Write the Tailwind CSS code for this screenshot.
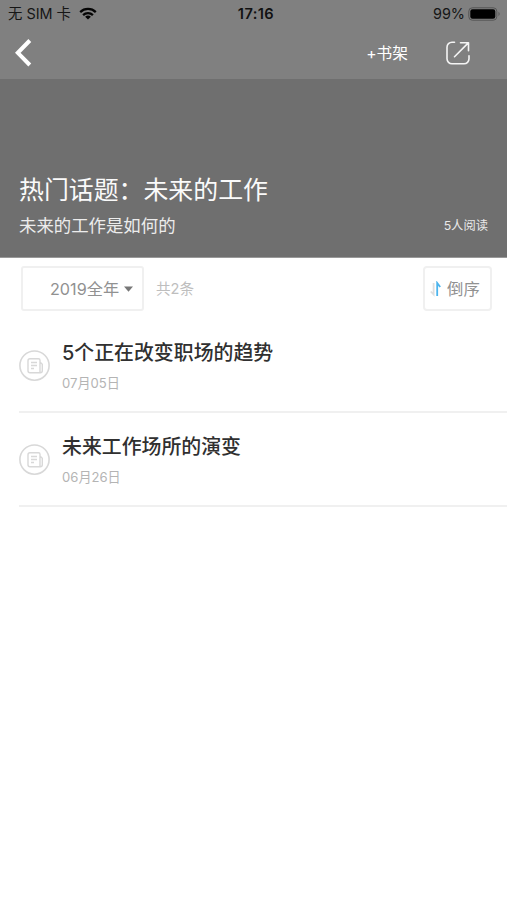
<!DOCTYPE html>
<html lang="zh-CN">
<head>
<meta charset="utf-8">
<title>热门话题</title>
<script src="https://cdn.jsdelivr.net/npm/@tailwindcss/browser@4"></script>
</head>
<body class="bg-white">
<div class="flex h-[900px] w-[507px] flex-col overflow-hidden bg-white font-['Inter','Noto_Sans_CJK_SC',sans-serif]">
  <header class="h-[79px] shrink-0 bg-[#808080]">
    <div class="grid h-[27px] grid-cols-3 items-center pl-2 pr-[6px] text-[14.4px] leading-[20px] text-[#161616]">
      <div class="flex items-center whitespace-nowrap">
        <span class="w-[64px]">无 SIM 卡</span>
        <svg class="ml-[7px] h-[13px] w-[18px]" viewBox="0 0 18 13" fill="none" stroke="#050505" stroke-width="2.3"><path d="M1.2 5.1a11.2 11.2 0 0 1 15.6 0M4.1 8.1a7 7 0 0 1 9.8 0"/><path d="M9 12.6 6.1 9.8a4.2 4.2 0 0 1 5.8 0Z" fill="#050505" stroke="none"/></svg>
      </div>
      <div class="pl-[3px] text-center text-[14.6px] font-semibold tracking-[0.4px] text-[#111]">17:16</div>
      <div class="flex items-center justify-end">
        <span>99%</span>
        <svg class="ml-[3px] h-[14px] w-[33px]" viewBox="0 0 33 14"><rect x=".8" y=".8" width="28" height="12.4" rx="3.5" fill="none" stroke="#555"/><rect x="2.3" y="2.3" width="25" height="9.4" rx="2.2" fill="#000"/><path d="M30.5 4.8q2.4 2.2 0 4.4Z" fill="#555"/></svg>
      </div>
    </div>
    <nav class="flex h-[52px] items-center pl-[15px] pr-[37px] text-white">
      <svg class="h-[28px] w-[17px]" viewBox="0 0 17 28" fill="none" stroke="#fff" stroke-width="4"><path d="M14.8 1.5 2.8 13.8l12 12.2"/></svg>
      <span class="ml-auto pt-px text-[15.7px] leading-[24px]">+书架</span>
      <svg class="ml-[38px] h-[24px] w-[24px]" viewBox="0 0 24 24" fill="none" stroke="#f4f4f4" stroke-width="1.6" stroke-linecap="round" stroke-linejoin="round"><path d="M8.5 1.2H6a5 5 0 0 0-5 5v11.6a5 5 0 0 0 5 5h12a5 5 0 0 0 5-5v-3M14.5 1.7h8v8M22.3 1.9 8.5 15.7"/></svg>
    </nav>
  </header>

  <section class="flex h-[179px] shrink-0 flex-col justify-end border-b border-[#999] bg-[#6f6f6f] px-[19px] pb-[18px]">
    <h1 class="text-[24.9px] leading-[36px] text-[#fafafa]">热门话题：未来的工作</h1>
    <div class="mt-[5px] flex items-center justify-between">
      <p class="text-[17.4px] leading-[26px] text-[#ececec]">未来的工作是如何的</p>
      <span class="text-[12.3px] leading-[20px] text-[#e8e8e8]">5人阅读</span>
    </div>
  </section>

  <div class="flex h-[61px] shrink-0 items-center pl-[21px] pr-[15px] text-[#919191]">
    <button class="flex h-[45px] w-[123px] items-center rounded-[3px] border-2 border-[#f0f0f0] pl-[27px] text-[16.2px] leading-[24px]">2019全年<svg class="ml-[5px] h-[6px] w-[9px]" viewBox="0 0 9 6"><path d="M0 .5h9L4.5 5.7Z" fill="#777"/></svg></button>
    <span class="ml-[12px] text-[14.6px] leading-[20px] text-[#bebebe]">共2条</span>
    <button class="ml-auto flex h-[45px] w-[69px] items-center rounded-[4px] border-2 border-[#f0f0f0] pl-[5px] text-[16.4px] leading-[24px]">
      <svg class="mr-[5px] h-[16px] w-[12px]" viewBox="0 0 12 16" fill="none" stroke-width="1.8"><path d="M3.6 2v11.5L.8 10.5" stroke="#dedede"/><path d="M7.2 15V2l3 4" stroke="#4cb4ed"/></svg>
      倒序
    </button>
  </div>

  <main class="pl-[19px]">
    <article class="flex h-[94px] border-b-2 border-[#f0f0f0]">
      <svg class="mt-[31px] h-[32px] w-[32px]" viewBox="0 0 32 32" fill="none" stroke="#d8d8d8" stroke-width="1.4"><circle cx="15.5" cy="15.6" r="14.6" stroke-width="1.6"/><path d="M11 8.8h8.5a1.5 1.5 0 0 1 1.5 1.5v12.5H11a2 2 0 0 1-2-2v-10a2 2 0 0 1 2-2ZM21 12l2.3 2.3v6.5a2 2 0 0 1-2 2h-2M12 12.5h6M12 15.5h6M12 18.5h3"/></svg>
      <div class="ml-[11px] pt-[19px]">
        <h2 class="text-[19.9px] font-medium leading-[30px] text-[#303030]">5个正在改变职场的趋势</h2>
        <p class="mt-[5px] text-[13.1px] leading-[20px] text-[#b4b4b4]">07月05日</p>
      </div>
    </article>
    <article class="flex h-[94px] border-b-2 border-[#f0f0f0]">
      <svg class="mt-[31px] h-[32px] w-[32px]" viewBox="0 0 32 32" fill="none" stroke="#d8d8d8" stroke-width="1.4"><circle cx="15.5" cy="15.6" r="14.6" stroke-width="1.6"/><path d="M11 8.8h8.5a1.5 1.5 0 0 1 1.5 1.5v12.5H11a2 2 0 0 1-2-2v-10a2 2 0 0 1 2-2ZM21 12l2.3 2.3v6.5a2 2 0 0 1-2 2h-2M12 12.5h6M12 15.5h6M12 18.5h3"/></svg>
      <div class="ml-[11px] pt-[19px]">
        <h2 class="text-[19.9px] font-medium leading-[30px] text-[#303030]">未来工作场所的演变</h2>
        <p class="mt-[5px] text-[13.1px] leading-[20px] text-[#b4b4b4]">06月26日</p>
      </div>
    </article>
  </main>
</div>
</body>
</html>
